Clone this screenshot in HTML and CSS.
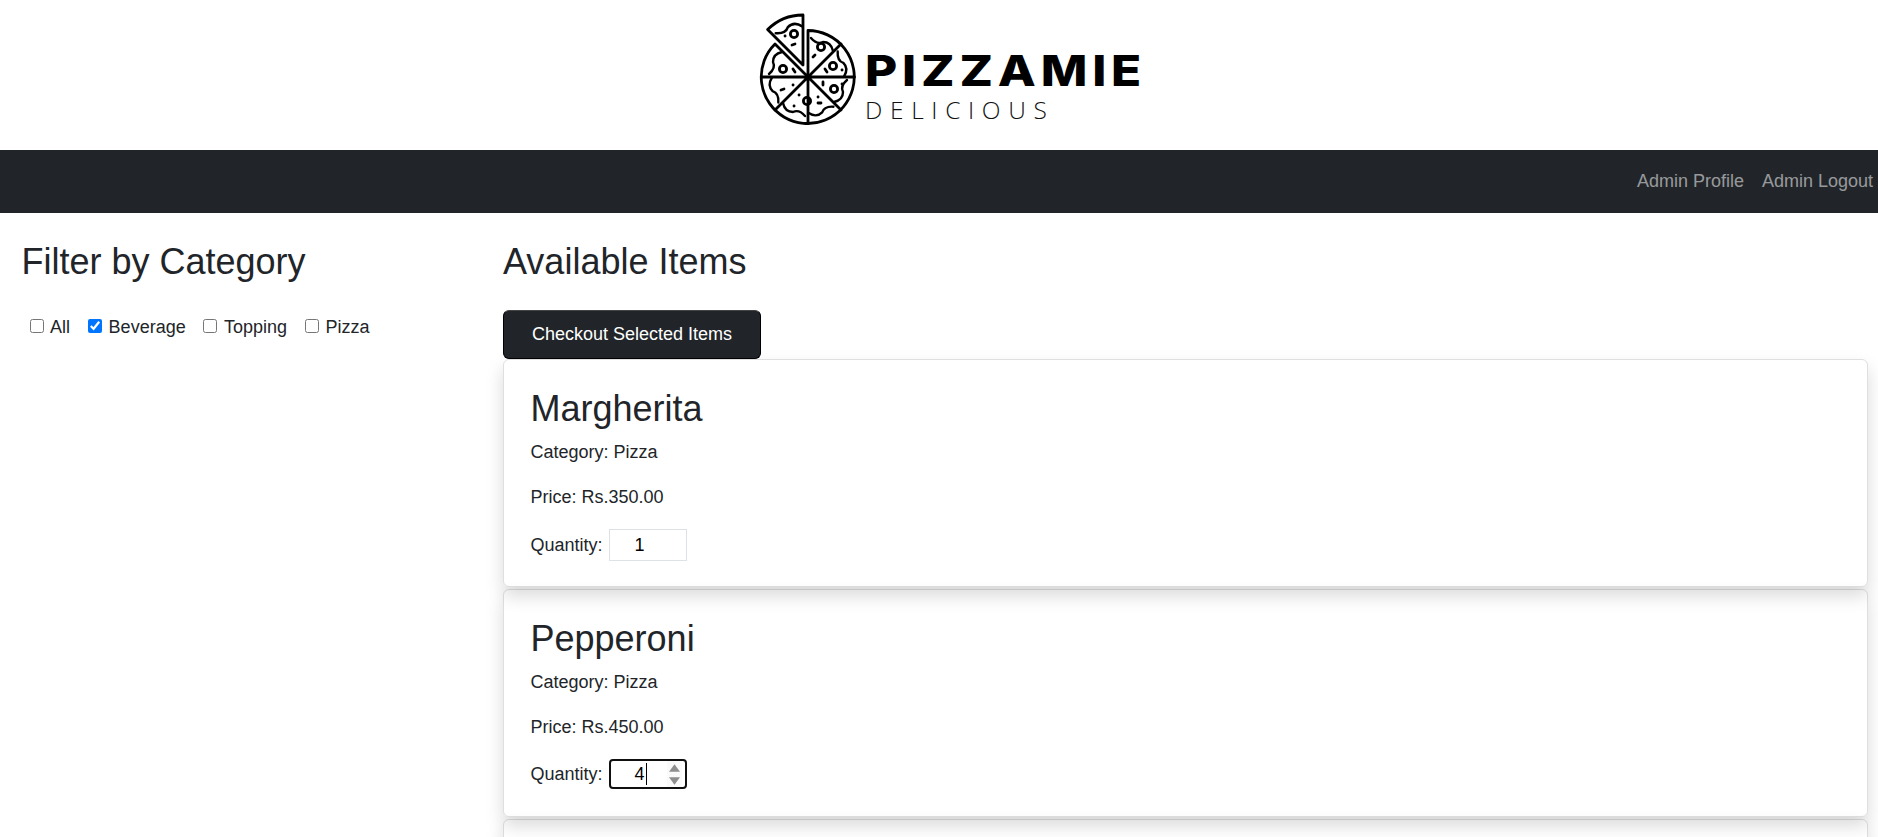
FILE: index.html
```html
<!DOCTYPE html>
<html>

<head>
  <title>Pizzamie Admin</title>
  <meta name="viewport" content="width=device-width,initial-scale=1">
  <link rel="stylesheet" href="styles.css">
</head>

<body>
  <header class="brand">
    <svg class="logo__icon" viewBox="0 0 110 120" width="110" height="120" fill="none" stroke="#000" stroke-width="2.8" stroke-linecap="round" stroke-linejoin="round">
      <defs>
        <path id="crust" d="M56 28 Q62 35 68 32 Q76 32 78 41" stroke-width="2.4"/>
      </defs>
      <!-- pie, with the gap left by the lifted slice -->
      <path d="M53 67 V20.5 A46.5 46.5 0 1 1 20 34 L53 67"/>
      <path d="M6.5 67 H99.5 M53 67 V113.5 M53 67 L86 34 M53 67 L86 100 M53 67 L20 100"/>
      <use href="#crust"/>
      <use href="#crust" transform="rotate(45 53 67)"/>
      <use href="#crust" transform="rotate(90 53 67)"/>
      <use href="#crust" transform="rotate(135 53 67)"/>
      <use href="#crust" transform="rotate(180 53 67)"/>
      <use href="#crust" transform="rotate(225 53 67)"/>
      <use href="#crust" transform="rotate(270 53 67)"/>
      <!-- lifted slice -->
      <path d="M48 55 V5 A50 50 0 0 0 12.6 19.6 Z"/>
      <use href="#crust" transform="translate(48 55) scale(1.07) rotate(-45) translate(-53 -67)"/>
      <!-- toppings -->
      <circle cx="39" cy="24" r="3.6"/>
      <circle cx="66" cy="37" r="3.6"/>
      <circle cx="78" cy="56" r="3.6"/>
      <circle cx="79" cy="79" r="3.6"/>
      <circle cx="52" cy="91" r="3.6"/>
      <circle cx="28" cy="59" r="3.6"/>
      <path d="M30 26 h.1 M37 35 l3 -1 M58 47 l2 -2 M70 59 l2 3 M87 60 h.1 M68 72 v3 M87 74 h.1 M26 80 l3 -1 M38 75 h.1 M38 59 l2 3 M44 85 h.1 M39 96 h.1 M63 87 h.1 M63 93 h3"/>
    </svg>
    <div class="logo__text">
      <span class="logo__name">PIZZAMIE</span>
      <span class="logo__tag">DELICIOUS</span>
    </div>
  </header>

  <nav class="navbar">
    <a href="#">Admin Profile</a>
    <a href="#">Admin Logout</a>
  </nav>

  <div class="page">
    <aside class="filters">
      <h2>Filter by Category</h2>
      <div class="filters__list">
        <label><input type="checkbox"> All</label>
        <label><input type="checkbox" checked> Beverage</label>
        <label><input type="checkbox"> Topping</label>
        <label><input type="checkbox"> Pizza</label>
      </div>
    </aside>

    <main class="items">
      <h2>Available Items</h2>
      <button class="checkout">Checkout Selected Items</button>

      <div class="card">
        <h3>Margherita</h3>
        <p>Category: Pizza</p>
        <p>Price: Rs.350.00</p>
        <p class="qty">Quantity: <span class="qty__box">1</span></p>
      </div>

      <div class="card">
        <h3>Pepperoni</h3>
        <p>Category: Pizza</p>
        <p>Price: Rs.450.00</p>
        <p class="qty">Quantity:
          <span class="qty__box qty__box--focus">4<span class="caret"></span>
            <span class="spin">
              <svg viewBox="0 0 10 7" width="11" height="8"><path d="M5 0 L10 7 H0 Z" fill="#8e8e8e"/></svg>
              <svg viewBox="0 0 10 7" width="11" height="8"><path d="M0 0 H10 L5 7 Z" fill="#8e8e8e"/></svg>
            </span>
          </span>
        </p>
      </div>

      <div class="card"></div>
    </main>
  </div>
</body>

</html>
```

FILE: styles.css
```css
* {
  box-sizing: border-box;
}

html,
body {
  height: 837px;
  overflow: hidden;
}

body {
  margin: 0;
  background: #fff;
  color: #212529;
  font-family: "Liberation Sans", Arial, sans-serif;
  font-size: 18px;
  line-height: 1.5;
}

h2 {
  margin: 0;
  font-size: 36px;
  font-weight: 500;
  line-height: 1.2;
}

.brand {
  height: 150px;
  display: flex;
  padding: 10px 0 0 755px;
}

.logo__icon {
  flex: none;
}

.logo__text {
  display: flex;
  flex-direction: column;
  align-items: flex-start;
  padding-top: 40px;
}

.logo__name {
  color: #000;
  font-family: Inter, sans-serif;
  font-size: 43px;
  font-weight: 800;
  line-height: 40px;
  letter-spacing: 4.2px;
  transform: scaleX(1.15);
  transform-origin: left;
}

.logo__tag {
  margin-top: 5px;
  color: #111;
  font-family: "Open Sans", sans-serif;
  font-size: 24.5px;
  font-weight: 300;
  line-height: 30px;
  letter-spacing: 7.65px;
}

.navbar {
  height: 63px;
  background: #212529;
  display: flex;
  justify-content: flex-end;
  align-items: center;
  gap: 18px;
  padding-right: 5px;
}

.navbar a {
  color: rgba(255, 255, 255, .55);
  text-decoration: none;
}

.page {
  display: flex;
}

.filters {
  width: 503px;
  flex: none;
  padding: 27px 0 0 21.5px;
}

.filters__list {
  display: flex;
  gap: 17.6px;
  margin-top: 31px;
  padding-left: 8.5px;
}

.filters__list input {
  margin: 0 2px 0 0;
  width: 14px;
  height: 14px;
}

.items {
  flex: 1;
  padding: 27px 10px 0 0;
}

.checkout {
  display: block;
  width: 258px;
  height: 49px;
  margin-top: 27px;
  border: 1px solid #000;
  border-top-color: #444;
  border-radius: 6px;
  background: #212529;
  color: #fff;
  font: 18px "Liberation Sans", Arial, sans-serif;
}

.card {
  height: 228px;
  margin-bottom: 2px;
  padding: 27px 26.5px 0;
  border: 1px solid rgba(0, 0, 0, .125);
  border-radius: 6px;
  box-shadow: 0 9px 18px rgba(0, 0, 0, .15);
}

.card h3 {
  margin: 0 0 8px;
  font-size: 36px;
  font-weight: 500;
  line-height: 43px;
}

.card p {
  margin: 0 0 16px;
  line-height: 29px;
}

.card .qty {
  display: flex;
  align-items: center;
  gap: 6px;
  margin-top: 17px;
}

.qty__box {
  display: flex;
  align-items: center;
  position: relative;
  width: 78px;
  height: 32px;
  padding-left: 25px;
  border: 1px solid #dee2e6;
  color: #000;
}

.qty__box--focus {
  height: 30px;
  border: 2px solid #101010;
  border-radius: 4px;
  padding-left: 24px;
}

.caret {
  width: 1px;
  height: 22px;
  margin-left: 1px;
  background: #000;
}

.spin {
  position: absolute;
  right: 3px;
  top: 0;
  bottom: 0;
  display: flex;
  flex-direction: column;
  justify-content: center;
  gap: 5px;
  padding: 0 2px;
  background: #fafafa;
}

.spin svg {
  display: block;
}
```
